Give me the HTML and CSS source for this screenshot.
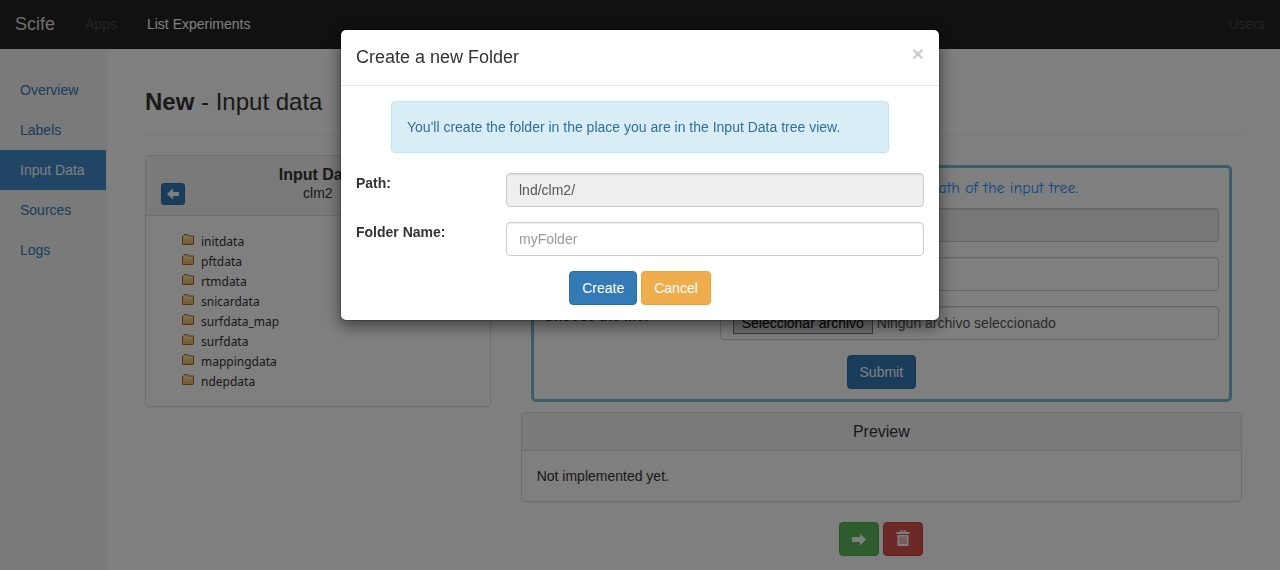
FILE: index.html
```html
<!DOCTYPE html>
<html lang="en">
<head>
<meta charset="utf-8">
<title>Scife - Input data</title>
<link rel="stylesheet" href="styles.css">
</head>
<body>
<svg class="defs" aria-hidden="true">
  <defs>
    <linearGradient id="folder-fill" x1="0" y1="0" x2="0" y2="1">
      <stop offset="0" stop-color="#ffe9b0"/>
      <stop offset="1" stop-color="#e8b45c"/>
    </linearGradient>
    <symbol id="folder" viewBox="0 0 12 11">
      <path d="M.5 10.5V2.500h1L2.500.5h3l1 1.500h5v8l-.5.5z" fill="url(#folder-fill)" stroke="#a8681a"/>
      <path d="M1 3.500h10" fill="none" stroke="#fff3d0"/>
    </symbol>
  </defs>
</svg>

<header class="navbar">
  <a class="brand" href="#">Scife</a>
  <nav class="nav">
    <a class="nav-link muted" href="#">Apps</a>
    <a class="nav-link active" href="#">List Experiments</a>
  </nav>
  <a class="nav-link muted nav-end" href="#">Users</a>
</header>

<div class="layout">
  <nav class="sidebar">
    <a class="side-link" href="#">Overview</a>
    <a class="side-link" href="#">Labels</a>
    <a class="side-link current" href="#">Input Data</a>
    <a class="side-link" href="#">Sources</a>
    <a class="side-link" href="#">Logs</a>
  </nav>

  <main class="main">
    <h1 class="page-title"><b>New</b> - Input data</h1>
    <div class="columns">
      <section class="panel">
        <div class="panel-head tree-head">
          <button class="btn btn-primary btn-xs" type="button" aria-label="Back">
            <svg width="12" height="12" viewBox="0 0 12 12"><path d="M0 6L6 .5V4h6v4H6v3.500z" fill="currentColor"/></svg>
          </button>
          <div class="tree-title">
            <h2 class="panel-title"><b>Input Data</b></h2>
            <span>clm2</span>
          </div>
        </div>
        <ul class="tree">
          <li><svg class="folder"><use href="#folder"/></svg>initdata</li>
          <li><svg class="folder"><use href="#folder"/></svg>pftdata</li>
          <li><svg class="folder"><use href="#folder"/></svg>rtmdata</li>
          <li><svg class="folder"><use href="#folder"/></svg>snicardata</li>
          <li><svg class="folder"><use href="#folder"/></svg>surfdata_map</li>
          <li><svg class="folder"><use href="#folder"/></svg>surfdata</li>
          <li><svg class="folder"><use href="#folder"/></svg>mappingdata</li>
          <li><svg class="folder"><use href="#folder"/></svg>ndepdata</li>
        </ul>
      </section>

      <div class="work">
        <form class="upload">
          <p class="hint">The file will be saved to the current path of the input tree.</p>
          <div class="field">
            <label class="label" for="up-path">Path:</label>
            <input class="control" id="up-path" type="text" value="lnd/clm2/" readonly>
          </div>
          <div class="field">
            <label class="label" for="up-name">File Name:</label>
            <input class="control" id="up-name" type="text">
          </div>
          <div class="field">
            <label class="label" for="up-file">Choose the file:</label>
            <label class="control file-control">
              <input class="file-input" id="up-file" type="file">
              <span class="file-button">Seleccionar archivo</span>
              <span>Ningún archivo seleccionado</span>
            </label>
          </div>
          <div class="actions">
            <button class="btn btn-primary" type="button">Submit</button>
          </div>
        </form>

        <section class="panel">
          <div class="panel-head"><h2 class="panel-title">Preview</h2></div>
          <p class="panel-body">Not implemented yet.</p>
        </section>

        <div class="actions footer-actions">
          <button class="btn btn-success" type="button" aria-label="Continue">
            <svg width="14" height="14" viewBox="0 0 14 14"><path d="M14 7.500L8 1.500V5H0v5h8v3.500z" fill="currentColor"/></svg>
          </button>
          <button class="btn btn-danger" type="button" aria-label="Delete">
            <svg width="14" height="18" viewBox="0 0 14 18"><path d="M4 2V.5h6V2h3.500v2H.5V2zM5.200 2h3.600v-.600H5.200z" fill="currentColor" fill-rule="evenodd"/><path d="M1.500 5h11v11h-11z" fill="currentColor"/><path d="M4 6.500V14M6 6.500V14M8 6.500V14M10 6.500V14" stroke="#d9534f" stroke-width=".8"/></svg>
          </button>
        </div>
      </div>
    </div>
  </main>
</div>

<div class="backdrop">
  <div class="modal" role="dialog" aria-modal="true" aria-labelledby="modal-title">
    <div class="modal-head">
      <h2 class="modal-title" id="modal-title">Create a new Folder</h2>
      <button class="close" type="button" aria-label="Close">×</button>
    </div>
    <form class="modal-body">
      <p class="alert">You'll create the folder in the place you are in the Input Data tree view.</p>
      <div class="field">
        <label class="label" for="path">Path:</label>
        <input class="control" id="path" type="text" value="lnd/clm2/" readonly>
      </div>
      <div class="field">
        <label class="label" for="folder-name">Folder Name:</label>
        <input class="control" id="folder-name" type="text" placeholder="myFolder">
      </div>
      <div class="actions">
        <button class="btn btn-primary" type="button">Create</button>
        <button class="btn btn-warning" type="button">Cancel</button>
      </div>
    </form>
  </div>
</div>
</body>
</html>
```
FILE: styles.css
```css
* { box-sizing: border-box; }

body {
  margin: 0;
  min-height: 100vh;
  display: flex;
  flex-direction: column;
  font: 14px/20px "Liberation Sans", Arial, sans-serif;
  color: #333;
  background: #fff;
}

a { text-decoration: none; }
h1, h2, p, ul { margin: 0; padding: 0; }
input, button { font: inherit; }
.defs { position: absolute; width: 0; height: 0; }

.navbar {
  display: flex;
  align-items: center;
  padding: 14px 15px 15px;
  background: #222;
}
.brand { font-size: 18px; color: #ddd; }
.nav { display: flex; gap: 30px; margin-left: 30px; }
.nav-link.active { color: #fff; }
.nav-link.muted { color: #484848; }
.nav-end { margin-left: auto; }

.layout { display: flex; flex: 1; }
.sidebar {
  flex: 0 0 107px;
  padding-top: 21px;
  background: #f5f5f5;
  border-right: 1px solid #eee;
}
.side-link { display: block; padding: 10px 20px; color: #337ab7; }
.side-link.current { color: #fff; background: #428bca; }

.main { flex: 1; min-width: 0; padding: 40px 38px 14px; }
.page-title {
  padding-bottom: 19px;
  margin-bottom: 20px;
  border-bottom: 1px solid #eee;
  font-size: 24px;
  font-weight: normal;
  line-height: 26px;
}
.columns {
  display: grid;
  grid-template-columns: calc(33.333% - 20px) 1fr;
  gap: 30px;
  align-items: start;
}

.panel {
  border: 1px solid #ddd;
  border-radius: 4px;
  box-shadow: 0 1px 1px rgba(0, 0, 0, .05);
}
.panel-head {
  padding: 10px 15px;
  background: #f5f5f5;
  border-bottom: 1px solid #ddd;
  border-radius: 3px 3px 0 0;
  text-align: center;
}
.panel-title { font-size: 16px; line-height: 17px; font-weight: normal; }
.tree-head {
  display: grid;
  grid-template-columns: 1fr auto 1fr;
  align-items: end;
  justify-items: start;
  min-height: 60px;
}
.tree-title { align-self: start; }
.tree-title span { display: block; }
.panel-body { padding: 15px; }

.tree {
  padding: 16px 36px 14px;
  list-style: none;
  font: 12px/20px "Noto Sans", sans-serif;
}
.tree li { display: flex; align-items: flex-start; gap: 7px; }
.folder { width: 12px; height: 11px; margin-top: 2px; }

.upload {
  margin: 10px;
  padding: 10px;
  display: grid;
  gap: 15px;
  border: 3px solid #7abccf;
  border-radius: 5px;
}
.hint {
  margin-bottom: -5px;
  text-align: center;
  color: #1e90ff;
  font-size: 16px;
  font-family: "Comic Sans MS", "Comic Neue", "Noto Sans", sans-serif;
}
.field { display: grid; grid-template-columns: 176px 1fr; align-items: start; }
.label { font-weight: bold; }
.control {
  width: 100%;
  height: 34px;
  padding: 6px 12px;
  border: 1px solid #ccc;
  border-radius: 4px;
  color: #555;
  background: #fff;
  box-shadow: inset 0 1px 1px rgba(0, 0, 0, .075);
}
.control[readonly] { background: #eee; }
.control::placeholder { color: #999; opacity: 1; }
.file-control { display: flex; align-items: center; gap: 4px; }
.file-input { position: absolute; width: 1px; height: 1px; opacity: 0; }
.file-button {
  padding: 0 8px;
  border: 1px solid #767676;
  color: #000;
  background: #ddd;
}

.actions { display: flex; justify-content: center; gap: 4px; }
.footer-actions { margin-top: 20px; }
.btn {
  display: inline-flex;
  align-items: center;
  justify-content: center;
  height: 34px;
  padding: 6px 12px;
  border: 1px solid;
  border-radius: 4px;
  color: #fff;
}
.btn-xs { height: 22px; padding: 1px 5px; border-radius: 3px; }
.btn-primary { background: #337ab7; border-color: #2e6da4; }
.btn-warning { background: #f0ad4e; border-color: #eea236; }
.btn-success { background: #5cb85c; border-color: #4cae4c; }
.btn-danger { background: #d9534f; border-color: #d43f3a; }

.backdrop {
  position: fixed;
  inset: 0;
  overflow: auto;
  background: rgba(0, 0, 0, .5);
}
.modal {
  max-width: 600px;
  margin: 29px auto;
  border: 1px solid rgba(0, 0, 0, .2);
  border-radius: 6px;
  background: #fff;
  background-clip: padding-box;
  box-shadow: 0 5px 15px rgba(0, 0, 0, .5);
}
.modal-head {
  display: flex;
  justify-content: space-between;
  align-items: flex-start;
  padding: 15px;
  border-bottom: 1px solid #e5e5e5;
}
.modal-title { font-size: 18px; line-height: 25px; font-weight: normal; }
.close {
  padding: 0;
  border: 0;
  background: none;
  font-size: 21px;
  font-weight: bold;
  line-height: 18px;
  color: #ccc;
}
.modal-body { display: grid; gap: 15px; padding: 15px; }
.alert {
  margin: 0 35px 5px;
  padding: 15px;
  border: 1px solid #bce8f1;
  border-radius: 4px;
  color: #31708f;
  background: #d9edf7;
}
.modal-body .field { grid-template-columns: 150px 1fr; }
```
